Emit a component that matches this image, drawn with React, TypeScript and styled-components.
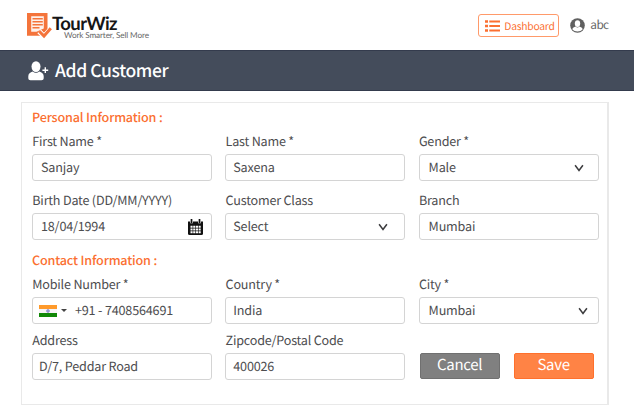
import React from "react";
import styled, { createGlobalStyle } from "styled-components";

const GlobalStyle = createGlobalStyle`
  * { box-sizing: border-box; }
  body {
    margin: 0;
    background: #fff;
    color: #4d4d4f;
    font-family: "Noto Sans CJK SC", "Noto Sans", sans-serif;
    text-rendering: geometricPrecision;
  }
`;

const Page = styled.div`
  width: 634px;
  height: 415px;
  overflow: hidden;
  display: flex;
  flex-direction: column;
`;

const TopBar = styled.header`
  height: 50px;
  display: flex;
  justify-content: space-between;
  padding: 0 25.5px 0 27px;
`;

const Brand = styled.div`
  display: flex;
  padding-top: 13px;
`;

const BrandText = styled.div`
  display: flex;
  flex-direction: column;
  padding-top: 2px;
  font-family: Lato, sans-serif;
`;

const BrandName = styled.span`
  font-size: 18.5px;
  line-height: 16px;
  font-weight: 700;
  letter-spacing: -0.6px;
  color: #161616;
  white-space: nowrap;
`;

const Tagline = styled.span`
  margin: 0 0 0 12px;
  font-size: 8.2px;
  line-height: 8px;
  letter-spacing: -0.13px;
  color: #666;
  white-space: nowrap;
`;

const Account = styled.div`
  display: flex;
  align-items: flex-start;
`;

const DashboardButton = styled.div`
  width: 81px;
  height: 23px;
  margin-top: 14px;
  padding-left: 6px;
  display: flex;
  align-items: center;
  gap: 4px;
  border: 1px solid #ff9a6a;
  border-radius: 3px;
  color: #fb6f31;
  font-size: 10.3px;
  line-height: 20px;
  letter-spacing: -0.25px;
  white-space: nowrap;
`;

const User = styled.div`
  display: flex;
  align-items: center;
  gap: 5px;
  height: 20px;
  margin: 15px 0 0 11px;
  font-size: 11.8px;
  line-height: 18px;
  letter-spacing: -0.6px;
  color: #666;
`;

const UserName = styled.span`
  margin-top: -1px;
`;

const TitleBar = styled.div`
  height: 41px;
  flex: none;
  display: flex;
  align-items: center;
  gap: 6px;
  padding-left: 28px;
  background: #444c5b;
  border-top: 1px solid #343b4d;
  border-bottom: 1px solid #343b4d;
  color: #fff;
`;

const Title = styled.h1`
  margin: 0;
  font-size: 17.5px;
  line-height: 36px;
  font-weight: 500;
  letter-spacing: -0.38px;
`;

const Panel = styled.main`
  width: 588px;
  height: 303px;
  margin: 11px 0 0 21px;
  padding: 6px 0 0 10px;
  border: 1px solid #e9e9e9;
  border-right-width: 2px;
`;

const SectionTitle = styled.h2<{ $top?: number }>`
  margin: ${(p) => p.$top ?? 0}px 0 0;
  height: 18px;
  line-height: 16px;
  font-size: 12.6px;
  font-weight: 500;
  letter-spacing: -0.16px;
  color: #fb6f31;
`;

const FieldGrid = styled.div<{ $top: number; $gap: number }>`
  display: grid;
  grid-template-columns: repeat(3, 180px);
  column-gap: 13.3px;
  row-gap: ${(p) => p.$gap}px;
  padding-top: ${(p) => p.$top}px;
`;

const Field = styled.div`
  display: flex;
  flex-direction: column;
`;

const Label = styled.label`
  height: 18px;
  margin-bottom: 4px;
  padding-left: 0.3px;
  line-height: 18px;
  font-size: 12.6px;
  letter-spacing: -0.2px;
  white-space: nowrap;
`;

const Control = styled.div<{ $left?: number; $right?: number }>`
  height: 27px;
  padding: 0 ${(p) => p.$right ?? 8}px 0 ${(p) => p.$left ?? 7}px;
  display: flex;
  align-items: center;
  justify-content: space-between;
  border: 1px solid #d4d4d4;
  border-radius: 3px;
  font-size: 12.6px;
  line-height: 25px;
  letter-spacing: -0.18px;
  white-space: nowrap;
`;

const Value = styled.span`
  line-height: 22px;
  margin-bottom: 2px;
`;

const Phone = styled.div`
  display: flex;
  align-items: center;
`;

const PhoneNumber = styled(Value)`
  margin-left: 8.5px;
`;

const Actions = styled.div`
  display: flex;
  align-items: flex-end;
  gap: 14px;
  padding: 0 0 1px 1px;
`;

const Button = styled.button<{ $primary?: boolean }>`
  width: 80px;
  height: 26px;
  padding: 0 0 2px;
  border: 1px solid ${(p) => (p.$primary ? "#ff702c" : "#707070")};
  border-radius: 2px;
  background: ${(p) => (p.$primary ? "#ff8345" : "#808080")};
  color: #fff;
  font-family: inherit;
  text-rendering: inherit;
  font-size: 15px;
  line-height: 22px;
  letter-spacing: -0.3px;
`;

const LogoIcon = () => (
  <svg width="25" height="26" viewBox="0 0 25 26">
    <path d="M0 0H20.500V16L17 20L14.500 17L11 19.500L13.500 22.800H0Z" fill="#f4743b" />
    <path d="M4.200 3.200H16.800V15.500L14.500 16.500L9.500 18.800H4.200Z" fill="#fff" opacity=".9" />
    <path d="M5.500 5.800H15.800M5.500 8.800H15.800M5.500 11.800H15.800M5.500 14.800H12.500" stroke="#f4743b" strokeWidth="1.600" />
    <path d="M12 18.500L17 23.300L23.800 15.800" fill="none" stroke="#fff" strokeWidth="4.800" />
    <path d="M12.200 18.200L17 23L23.800 15.300" fill="none" stroke="#f4743b" strokeWidth="3" />
  </svg>
);

const ListIcon = () => (
  <svg width="15" height="12" viewBox="0 0 15 12">
    <path d="M0 1.500H3M0 6H3M0 10.500H3" stroke="#fb6f31" strokeWidth="2.400" />
    <path d="M4.300 1.500H15M4.300 6H15M4.300 10.500H15" stroke="#fb6f31" strokeWidth="1.900" />
  </svg>
);

const UserIcon = () => (
  <svg width="15" height="15" viewBox="0 0 15 15">
    <circle cx="7.500" cy="7.500" r="7.300" fill="#606060" />
    <ellipse cx="7.500" cy="5.600" rx="2.700" ry="3.400" fill="#fff" />
    <path d="M5.700 8.600C4 9.400 2.700 9.600 2.300 11.200C5 14.100 10 14.100 12.700 11.200C12.300 9.600 11 9.400 9.300 8.600C8.300 9.800 6.700 9.800 5.700 8.600Z" fill="#fff" />
  </svg>
);

const AddUserIcon = () => (
  <svg width="21" height="20" viewBox="0 0 21 20" fill="#fff">
    <ellipse cx="8" cy="5.600" rx="4.500" ry="5.400" />
    <path d="M4.800 10.500C2.200 11.300 0.300 12.500 0.300 15.300V17C0.300 18.500 1.200 19.200 2.500 19.200H13.500C14.800 19.200 15.700 18.500 15.700 17V15.300C15.700 12.500 13.800 11.300 11.200 10.500C9.500 12.300 6.500 12.300 4.800 10.500Z" />
    <path d="M17.300 6.300V12.100M14.400 9.200H20.200" stroke="#fff" strokeWidth="1.400" />
  </svg>
);

const CalendarIcon = () => (
  <svg width="15" height="16" viewBox="0 0 15 16">
    <path d="M0 2.500H15V14.500Q15 16 13.500 16H1.500Q0 16 0 14.500Z" fill="#111" />
    <path d="M3.500 0V4.300M11.500 0V4.300" stroke="#fff" strokeWidth="2.800" />
    <path d="M3.500 0V4M11.500 0V4" stroke="#111" strokeWidth="1.700" />
    <path d="M2.500 7.800H12.700M2.500 10.500H12.700M2.500 13.200H12.700" stroke="#fff" strokeWidth="2" strokeDasharray="2.100 .6" />
  </svg>
);

const Chevron = () => (
  <svg width="10" height="8" viewBox="0 0 10 8">
    <path d="M1.100 1.200L5 6.400L8.900 1.200" fill="none" stroke="#3c3c3e" strokeWidth="1.500" />
  </svg>
);

const IndiaFlag = () => (
  <svg width="18" height="12" viewBox="0 0 18 12">
    <rect width="18" height="4" fill="#ff9a2b" />
    <rect y="4" width="18" height="4" fill="#f6f4f6" />
    <rect y="8" width="18" height="4" fill="#128807" />
    <circle cx="9" cy="6" r="1.400" fill="#a9a6dc" stroke="#7773bd" strokeWidth=".6" />
  </svg>
);

const Caret = styled.span`
  margin-left: 3.5px;
  border: 3px solid transparent;
  border-top: 3px solid #444;
  border-bottom: 0;
`;

export default function App() {
  return (
    <Page>
      <GlobalStyle />
      <TopBar>
        <Brand>
          <LogoIcon />
          <BrandText>
            <BrandName>TourWiz</BrandName>
            <Tagline>Work Smarter, Sell More</Tagline>
          </BrandText>
        </Brand>
        <Account>
          <DashboardButton>
            <ListIcon />
            <span>Dashboard</span>
          </DashboardButton>
          <User>
            <UserIcon />
            <UserName>abc</UserName>
          </User>
        </Account>
      </TopBar>
      <TitleBar>
        <AddUserIcon />
        <Title>Add Customer</Title>
      </TitleBar>
      <Panel>
        <SectionTitle>Personal Information :</SectionTitle>
        <FieldGrid $top={5} $gap={10}>
          <Field>
            <Label>First Name *</Label>
            <Control $left={8}>
              <Value>Sanjay</Value>
            </Control>
          </Field>
          <Field>
            <Label>Last Name *</Label>
            <Control>
              <Value>Saxena</Value>
            </Control>
          </Field>
          <Field>
            <Label>Gender *</Label>
            <Control $left={9} $right={14}>
              <Value>Male</Value>
              <Chevron />
            </Control>
          </Field>
          <Field>
            <Label>Birth Date (DD/MM/YYYY)</Label>
            <Control $left={8}>
              <Value>18/04/1994</Value>
              <CalendarIcon />
            </Control>
          </Field>
          <Field>
            <Label>Customer Class</Label>
            <Control $right={16}>
              <Value>Select</Value>
              <Chevron />
            </Control>
          </Field>
          <Field>
            <Label>Branch</Label>
            <Control $left={9}>
              <Value>Mumbai</Value>
            </Control>
          </Field>
        </FieldGrid>
        <SectionTitle $top={12}>Contact Information :</SectionTitle>
        <FieldGrid $top={5} $gap={7}>
          <Field>
            <Label>Mobile Number *</Label>
            <Control $left={6}>
              <Phone>
                <IndiaFlag />
                <Caret />
                <PhoneNumber>+91 - 7408564691</PhoneNumber>
              </Phone>
            </Control>
          </Field>
          <Field>
            <Label>Country *</Label>
            <Control>
              <Value>India</Value>
            </Control>
          </Field>
          <Field>
            <Label>City *</Label>
            <Control $left={9} $right={10}>
              <Value>Mumbai</Value>
              <Chevron />
            </Control>
          </Field>
          <Field>
            <Label>Address</Label>
            <Control $left={6}>
              <Value>D/7, Peddar Road</Value>
            </Control>
          </Field>
          <Field>
            <Label>Zipcode/Postal Code</Label>
            <Control>
              <Value>400026</Value>
            </Control>
          </Field>
          <Actions>
            <Button>Cancel</Button>
            <Button $primary>Save</Button>
          </Actions>
        </FieldGrid>
      </Panel>
    </Page>
  );
}
